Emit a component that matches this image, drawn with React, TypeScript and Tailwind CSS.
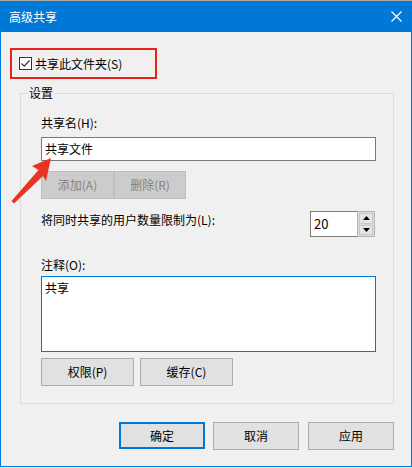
import React from "react";

const font = { fontFamily: '"Noto Sans CJK SC", "Noto Sans", sans-serif' };

function Btn({
  children,
  w,
  disabled,
  primary,
}: {
  children: React.ReactNode;
  w: string;
  disabled?: boolean;
  primary?: boolean;
}) {
  const base = "flex items-center justify-center text-[12px] leading-none";
  if (disabled)
    return (
      <div className={`${base} ${w} h-[28px] bg-[#cccccc] border border-[#bfbfbf] text-[#838383]`}>{children}</div>
    );
  if (primary)
    return (
      <div className={`${base} ${w} h-[27px] bg-[#e1e1e1] border-2 border-[#0078d7] text-black`}>{children}</div>
    );
  return (
    <div className={`${base} ${w} h-[28px] bg-[#e1e1e1] border border-[#adadad] text-black`}>{children}</div>
  );
}

function Spinner() {
  return (
    <div className="flex h-[26px]">
      <div className="w-[47px] border border-r-0 border-[#7a7a7a] bg-white flex items-center pl-[3px] text-[13px]">20</div>
      <div className="w-[18px] flex flex-col border border-[#b4b4b4] bg-[#dcdcdc] p-px gap-px">
        <div className="flex-1 flex items-center justify-center bg-[#e6e6e6] border border-[#c8c8c8]">
          <svg width="7" height="4" viewBox="0 0 7 4">
            <path d="M3.5 0 L7 4 L0 4 Z" fill="#000" />
          </svg>
        </div>
        <div className="flex-1 flex items-center justify-center bg-[#e6e6e6] border border-[#c8c8c8]">
          <svg width="7" height="4" viewBox="0 0 7 4">
            <path d="M0 0 L7 0 L3.5 4 Z" fill="#000" />
          </svg>
        </div>
      </div>
    </div>
  );
}

export default function App() {
  return (
    <div className="relative w-[412px] h-[468px] overflow-hidden bg-[#f0f0f0] text-black" style={font}>
      {/* desktop sliver above the window */}
      <div className="h-px bg-[#a9a9a9]" />
      <div className="flex flex-col h-[466px] border-x border-b border-[#0078d7]">
        {/* title bar */}
        <div className="h-[31px] bg-[#0078d7] flex items-center justify-between pl-[8px] pr-[9px] text-white">
          <span className="text-[12px]">高级共享</span>
          <svg width="11" height="11" viewBox="0 0 11 11">
            <path d="M0.5 0.5 L10.5 10.5 M10.5 0.5 L0.5 10.5" stroke="#fff" strokeWidth="1.2" />
          </svg>
        </div>

        {/* share checkbox */}
        <div className="mt-[16px] ml-[9px] w-[147px] h-[31px] border-2 border-[#e8231b] flex items-center pl-[7px] gap-[3px]">
          <div className="w-[13px] h-[13px] border border-[#333333] bg-white flex items-center justify-center">
            <svg width="11" height="11" viewBox="0 0 11 11">
              <path d="M1.5 5.5 L4.2 8.2 L9.5 2.5" stroke="#333" strokeWidth="1.2" fill="none" />
            </svg>
          </div>
          <span className="text-[12px]">共享此文件夹(S)</span>
        </div>

        {/* settings group */}
        <div className="relative mt-[14px] ml-[19px] w-[374px] h-[311px] border border-[#dcdcdc] pl-[20px] pt-[21px]">
          <span className="absolute left-[6px] -top-[9px] px-[2px] bg-[#f0f0f0] text-[12px] leading-[16px]">设置</span>
          <div className="text-[12px] leading-[16px]">共享名(H):</div>
          <div className="mt-[6px] w-[335px] h-[24px] border border-[#7a7a7a] bg-white flex items-center pl-[3px] text-[12px]">
            共享文件
          </div>
          <div className="mt-[10px] flex">
            <Btn w="w-[73px]" disabled>
              添加(A)
            </Btn>
            <Btn w="w-[72px]" disabled>
              删除(R)
            </Btn>
          </div>
          <div className="mt-[12px] w-[334px] flex justify-between items-start">
            <span className="mt-px text-[12px] leading-[16px]">将同时共享的用户数量限制为(L):</span>
            <Spinner />
          </div>
          <div className="mt-[20px] text-[12px] leading-[16px]">注释(O):</div>
          <div className="mt-[3px] w-[335px] h-[76px] border border-[#0078d7] bg-white pl-[3px] pt-[3px] text-[12px] leading-[16px]">
            共享
          </div>
          <div className="mt-[6px] flex gap-[6px]">
            <Btn w="w-[93px]">权限(P)</Btn>
            <Btn w="w-[93px]">缓存(C)</Btn>
          </div>
        </div>

        {/* footer */}
        <div className="mt-[18px] flex justify-end pr-[17px] gap-[8px]">
          <Btn w="w-[86px]" primary>
            确定
          </Btn>
          <Btn w="w-[86px]">取消</Btn>
          <div className="ml-px">
            <Btn w="w-[86px]">应用</Btn>
          </div>
        </div>
      </div>

      {/* red annotation arrow */}
      <svg className="absolute left-0 top-0" width="412" height="468" viewBox="0 0 412 468">
        <path
          d="M51 158 L32 166 L38.5 170 L11.5 201 L14 203.5 L43 176 L46 181 Z"
          fill="#ea3323"
        />
      </svg>
    </div>
  );
}
